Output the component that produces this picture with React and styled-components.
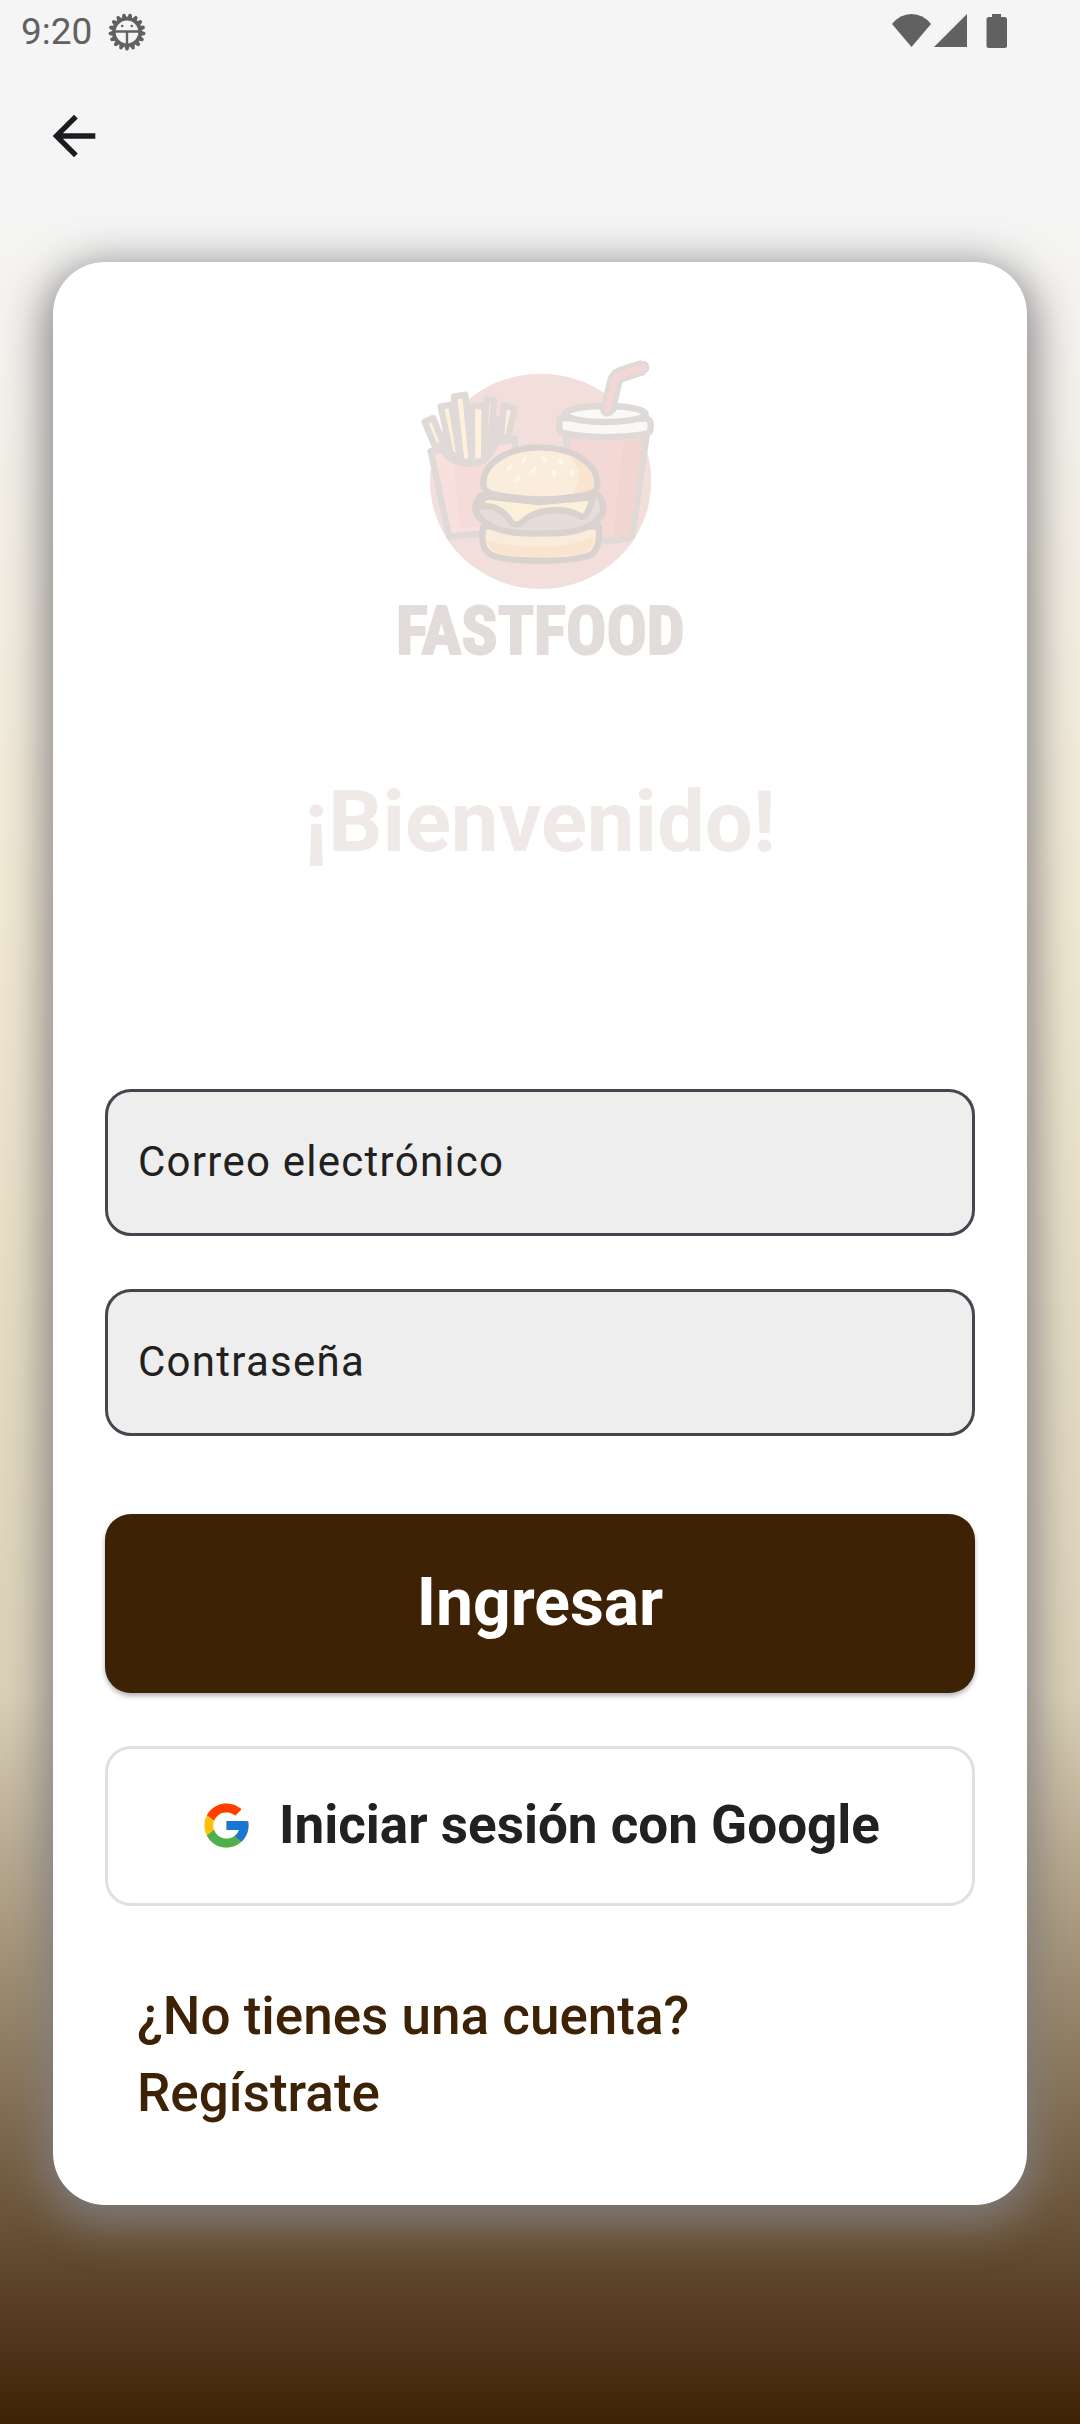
import React from "react";
import styled, { createGlobalStyle } from "styled-components";

const GlobalStyle = createGlobalStyle`
  *, *::before, *::after { box-sizing: border-box; }
  html, body, #root { height: 100%; }
  body { margin: 0; font-family: Roboto, "Noto Sans", sans-serif; color: #212121; }
`;

const Screen = styled.div`
  min-height: 100%;
  display: flex;
  flex-direction: column;
  background: #f5f5f5;
`;

const StatusBar = styled.header`
  display: flex;
  justify-content: space-between;
  align-items: center;
  height: 64px;
  padding: 0 72px 0 21px;
  color: #616161;
`;

const StatusGroup = styled.div`
  display: flex;
  align-items: center;
  gap: 16px;
`;

const Clock = styled.time`
  font-size: 37px;
  line-height: 44px;
`;

const AppBar = styled.nav`
  display: flex;
  align-items: center;
  height: 144px;
  padding: 0 42px;
`;

const BackButton = styled.button`
  display: flex;
  padding: 0;
  border: 0;
  background: none;
  color: #1d1b20;
`;

const Body = styled.main`
  flex: 1;
  padding: 54px 53px 220px;
  background: linear-gradient(180deg, #f5f5f5 0%, #f1e8d1 33%, #dbd1b8 67%, #3e2206 100%);
`;

const Card = styled.form`
  display: flex;
  flex-direction: column;
  padding: 78px 52px 73px;
  border-radius: 52px;
  background: #fff;
  box-shadow: 0 11px 42px 9px rgba(127, 125, 126, 0.9);
`;

const Intro = styled.div`
  display: flex;
  flex-direction: column;
  align-items: center;
  gap: 93px;
  margin-bottom: 218px;
`;

const Title = styled.h1`
  margin: 0;
  font-size: 85px;
  line-height: 98px;
  font-weight: 700;
  color: #efe9e7;
`;

const Fields = styled.div`
  display: flex;
  flex-direction: column;
  gap: 53px;
  margin-bottom: 78px;
`;

/* The input and its label share one grid cell; the label hides once there is a value. */
const FieldBox = styled.label`
  display: grid;
  align-items: center;
  height: 147px;
  border: 3px solid #49454f;
  border-radius: 26px;
  background: #eee;
  font-size: 42px;
  line-height: 48px;
  letter-spacing: 0.03em;
  color: #212121;
`;

const FieldInput = styled.input`
  grid-area: 1 / 1;
  width: 100%;
  height: 100%;
  padding: 0 30px 2px;
  border: 0;
  outline: 0;
  background: transparent;
  font: inherit;
  letter-spacing: inherit;
  color: inherit;
  &:not(:placeholder-shown) + span { visibility: hidden; }
`;

const FieldLabel = styled.span`
  grid-area: 1 / 1;
  padding: 0 30px 2px;
  pointer-events: none;
`;

const Actions = styled.div`
  display: flex;
  flex-direction: column;
  gap: 53px;
`;

const PrimaryButton = styled.button`
  height: 179px;
  padding: 0 0 2px;
  border: 0;
  border-radius: 26px;
  background: #3e2206;
  color: #fff;
  font: 700 66px/78px Roboto, "Noto Sans", sans-serif;
  box-shadow: 0 3px 5px rgba(0, 0, 0, 0.3);
`;

const GoogleButton = styled.button`
  display: flex;
  align-items: center;
  justify-content: center;
  gap: 26px;
  height: 160px;
  padding: 0 0 2px;
  border: 3px solid #e0e0e0;
  border-radius: 26px;
  background: #fff;
  color: #212121;
  font: 700 53px/62px Roboto, "Noto Sans", sans-serif;
`;

const RegisterLink = styled.a`
  max-width: 640px;
  margin: 72px 32px 0;
  font-size: 53px;
  line-height: 77px;
  font-weight: 500;
  color: #3e2206;
  text-decoration: none;
`;

const BrandSvg = styled.svg`
  display: block;
  width: 320px;
  height: 340px;
`;

const teeth = Array.from({ length: 17 }, (_, i) => (i * 360) / 17 + 180);

const DebugIcon = () => (
  <svg width="38" height="38" viewBox="0 0 38 38" fill="none" stroke="currentColor" aria-hidden="true">
    {teeth.map((a) => (
      <path key={a} d="M17 5 18.300 1.300 19.700 1.300 21 5Z" fill="currentColor" strokeWidth="1.400" strokeLinejoin="round" transform={`rotate(${a} 19 19)`} />
    ))}
    <circle cx="19" cy="19" r="13" strokeWidth="3.200" />
    <path d="M7 18.500H31M19 18.500V32" strokeWidth="2.400" />
    <circle cx="14.200" cy="13" r="1.300" fill="currentColor" stroke="none" />
    <circle cx="23.800" cy="13" r="1.300" fill="currentColor" stroke="none" />
  </svg>
);

const SignalIcons = () => (
  <svg width="116" height="36" viewBox="0 0 116 36" fill="currentColor" aria-hidden="true">
    <path d="M0 10Q8 0 19.500 0T39 10L19.500 33Z" />
    <path d="M42 33 75 0V33Z" />
    <path d="M100 0h9v3h3.500a2.500 2.500 0 0 1 2.500 2.500v26a2.500 2.500 0 0 1-2.500 2.500h-15.500a2.500 2.500 0 0 1-2.500-2.500v-26a2.500 2.500 0 0 1 2.500-2.500h3Z" />
  </svg>
);

const BackIcon = () => (
  <svg width="64" height="64" viewBox="0 0 24 24" fill="currentColor" aria-hidden="true">
    <path d="M20 11H7.830l5.590-5.590L12 4l-8 8 8 8 1.410-1.410L7.830 13H20v-2z" />
  </svg>
);

const GoogleIcon = () => (
  <svg width="53" height="53" viewBox="0 0 48 48" aria-hidden="true">
    <path fill="#FFC107" d="M43.611 20.083H42V20H24v8h11.303c-1.649 4.657-6.080 8-11.303 8-6.627 0-12-5.373-12-12s5.373-12 12-12c3.059 0 5.842 1.154 7.961 3.039l5.657-5.657C34.046 6.053 29.268 4 24 4 12.955 4 4 12.955 4 24s8.955 20 20 20 20-8.955 20-20c0-1.341-.138-2.650-.389-3.917z" />
    <path fill="#FF3D00" d="m6.306 14.691 6.571 4.819C14.655 15.108 18.961 12 24 12c3.059 0 5.842 1.154 7.961 3.039l5.657-5.657C34.046 6.053 29.268 4 24 4 16.318 4 9.656 8.337 6.306 14.691z" />
    <path fill="#4CAF50" d="M24 44c5.166 0 9.860-1.977 13.409-5.192l-6.190-5.238C29.211 35.091 26.715 36 24 36c-5.202 0-9.619-3.317-11.283-7.946l-6.522 5.025C9.505 39.556 16.227 44 24 44z" />
    <path fill="#1976D2" d="M43.611 20.083H42V20H24v8h11.303c-.792 2.237-2.231 4.166-4.087 5.571l6.193 5.238C36.971 39.205 44 34 44 24c0-1.341-.138-2.650-.389-3.917z" />
  </svg>
);

/* Fries, soda and burger over the brand disc, with the wordmark below. */
const Brand = () => (
  <BrandSvg viewBox="0 0 960 1020" role="img" aria-label="FastFood" strokeLinejoin="round" strokeLinecap="round">
    <ellipse cx="482" cy="424" rx="332" ry="323" fill="#f2dedb" />
    <g stroke="#dfd9d7" strokeWidth="19">
      <g>
        <path d="M152 334 208 590 302 580 400 480 405 296 360 306 200 320Z" fill="#f8e0dc" />
        <path d="M220 375 240 565 300 560 330 370Z" fill="#f5dcd8" stroke="none" />
        <g fill="#fdf1dd">
          <path d="M134 246 160 234 190 312 166 322Z" />
          <path d="M362 296 372 196 404 206 384 292Z" />
          <path d="M342 238 352 238 348 300 322 340Z" />
          <path d="M320 178 342 182 330 310 310 330Z" />
          <path d="M276 198 314 198 312 362 276 368Z" />
          <path d="M182 200 214 194 240 358 212 340Z" />
          <path d="M222 170 256 164 276 366 244 364Z" />
        </g>
        <path d="M152 334 188 328Q210 370 270 372Q325 370 350 308L402 298" fill="none" />
      </g>
      <g>
        <path d="M556 286 580 420 660 600Q710 606 756 590L800 286Z" fill="#f3d9d5" />
        <path d="M730 302 700 590 750 585 788 300Z" fill="#f0d5d1" stroke="none" />
        <path d="M554 234Q536 230 538 248V266Q540 280 556 280Q676 302 794 282Q812 280 812 264V250Q810 236 796 236Z" fill="#faf8f3" />
        <ellipse cx="676" cy="222" rx="121" ry="24" fill="#faf9f6" />
        <path d="M684 212 704 126Q708 110 722 104L790 82" fill="none" strokeWidth="46" strokeLinecap="butt" />
        <circle cx="788" cy="82" r="20" fill="#dfd9d7" stroke="none" />
        <circle cx="682" cy="208" r="22" fill="#dfd9d7" stroke="none" />
        <path d="M682 208 702 126Q706 110 722 104L788 82" fill="none" stroke="#f3d7d4" strokeWidth="21" />
      </g>
    </g>
    <g stroke="#d9d2cf" strokeWidth="19">
      <path d="M310 560Q298 624 332 644Q370 662 482 662Q600 662 636 642Q662 622 656 560Z" fill="#faecdb" />
      <path d="M302 466Q270 510 304 538Q350 586 482 580Q610 584 652 540Q686 510 656 466Z" fill="#e6dcd9" />
      <path d="M322 470Q304 476 300 500Q352 490 386 536Q408 570 436 538Q470 510 540 510Q580 514 604 530Q622 536 638 472L480 486Z" fill="#fdf0d9" />
      <path d="M310 434C308 364 392 322 480 322C570 322 654 366 652 436Q652 454 626 462Q480 494 338 462Q312 456 310 434Z" fill="#fbeddc" />
    </g>
    <path d="M560 342Q620 386 580 460Q640 458 642 430Q636 372 560 342Z" fill="#f9e4d0" />
    <path d="M322 602Q330 636 370 642Q480 660 600 642Q640 634 644 590Q500 646 322 602Z" fill="#f9e4d0" />
    <g fill="#fbf9ef">
      {[[388, 383, 42], [432, 359, 35], [414, 415, 35], [461, 390, 25], [492, 357, -20], [543, 366, -45], [522, 400, -15], [576, 397, -28]].map(([x, y, r]) => (
        <ellipse key={x} cx={x} cy={y} rx="6" ry="11" transform={`rotate(${r} ${x} ${y})`} />
      ))}
    </g>
    <text x="481" y="941" textAnchor="middle" fontFamily="'Roboto Condensed', Roboto, sans-serif" fontSize="201" fontWeight="700" fill="#e2dcda" stroke="#e2dcda" strokeWidth="6">
      FASTFOOD
    </text>
  </BrandSvg>
);

const Field = ({ id, type, label }) => (
  <FieldBox htmlFor={id}>
    <FieldInput id={id} type={type} placeholder=" " />
    <FieldLabel>{label}</FieldLabel>
  </FieldBox>
);

export default function App() {
  return (
    <>
      <GlobalStyle />
      <Screen>
        <StatusBar>
          <StatusGroup>
            <Clock>9:20</Clock>
            <DebugIcon />
          </StatusGroup>
          <SignalIcons />
        </StatusBar>
        <AppBar>
          <BackButton type="button" aria-label="Volver">
            <BackIcon />
          </BackButton>
        </AppBar>
        <Body>
          <Card onSubmit={(e) => e.preventDefault()}>
            <Intro>
              <Brand />
              <Title>¡Bienvenido!</Title>
            </Intro>
            <Fields>
              <Field id="email" type="email" label="Correo electrónico" />
              <Field id="password" type="password" label="Contraseña" />
            </Fields>
            <Actions>
              <PrimaryButton type="submit">Ingresar</PrimaryButton>
              <GoogleButton type="button">
                <GoogleIcon />
                Iniciar sesión con Google
              </GoogleButton>
            </Actions>
            <RegisterLink href="#registro">¿No tienes una cuenta? Regístrate</RegisterLink>
          </Card>
        </Body>
      </Screen>
    </>
  );
}
